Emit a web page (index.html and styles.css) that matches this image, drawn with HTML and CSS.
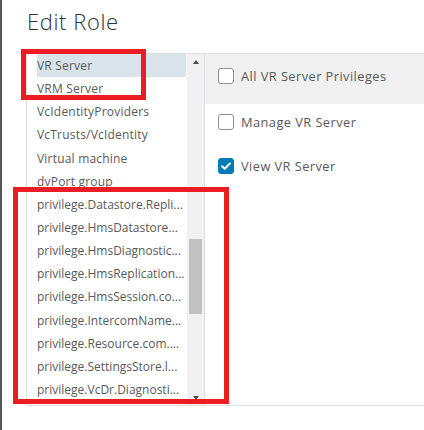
FILE: index.html
```html
<!DOCTYPE html>
<html lang="en">
<head>
<meta charset="utf-8">
<title>Edit Role</title>
<link rel="stylesheet" href="styles.css">
</head>
<body>
<div class="page">
  <h1 class="title">Edit Role</h1>
  <div class="panel">
    <div class="list-wrap">
      <ul class="list">
        <li class="item selected">VR Server</li>
        <li class="item">VRM Server</li>
        <li class="item">VcIdentityProviders</li>
        <li class="item">VcTrusts/VcIdentity</li>
        <li class="item">Virtual machine</li>
        <li class="item">dvPort group</li>
        <li class="item long">privilege.Datastore.Repli...</li>
        <li class="item long">privilege.HmsDatastore...</li>
        <li class="item long">privilege.HmsDiagnostic...</li>
        <li class="item long">privilege.HmsReplication...</li>
        <li class="item long">privilege.HmsSession.co...</li>
        <li class="item long">privilege.IntercomName...</li>
        <li class="item long">privilege.Resource.com....</li>
        <li class="item long">privilege.SettingsStore.l...</li>
        <li class="item long">privilege.VcDr.Diagnosti...</li>
      </ul>
      <div class="scrollbar">
        <div class="sb-btn"><span class="tri tri-up"></span></div>
        <div class="track"><div class="thumb"></div></div>
        <div class="sb-btn"><span class="tri tri-down"></span></div>
      </div>
    </div>
    <div class="privs">
      <label class="priv priv-all"><span class="cb"></span><span class="priv-label">All VR Server Privileges</span></label>
      <div class="priv-list">
        <label class="priv"><span class="cb"></span><span class="priv-label">Manage VR Server</span></label>
        <label class="priv"><span class="cb checked"><svg viewBox="0 0 16 16" width="16" height="16"><path d="M4 8.2 L6.8 10.8 L12 5.4" fill="none" stroke="#fff" stroke-width="2" stroke-linecap="round" stroke-linejoin="round"/></svg></span><span class="priv-label">View VR Server</span></label>
      </div>
    </div>
  </div>
  <div class="mark mark-top"></div>
  <div class="mark mark-bottom"></div>
</div>
</body>
</html>
```
FILE: styles.css
```css
* { box-sizing: border-box; }
html, body { margin: 0; padding: 0; background: #fff; }
body { width: 424px; height: 430px; overflow: hidden; font-family: "Open Sans", Lato, sans-serif; color: #565656; }

.page { position: relative; height: 430px; border-left: 2px solid #575757; }

.title {
  margin: 0;
  height: 53px;
  padding: 7px 0 0 25px;
  font-size: 22px;
  line-height: 28px;
  font-weight: 300;
  letter-spacing: 0.6px;
  color: #313131;
}

.panel {
  margin-left: 24px;
  height: 353px;
  display: flex;
  border-top: 1px solid #dedede;
  border-bottom: 1px solid #dedede;
  border-left: 1px solid #dedede;
}

.list-wrap { display: flex; flex: none; }

.list {
  list-style: none;
  margin: 0;
  padding: 0 1px 0 10px;
  width: 160px;
}
.item {
  height: 23.15px;
  line-height: 23.15px;
  font-size: 12px;
  letter-spacing: 0.2px;
  white-space: nowrap;
  overflow: hidden;
  color: #595959;
}
.item.long { letter-spacing: 0; }
.item.selected { background: #d9e4ea; }

.scrollbar {
  width: 17px;
  background: #f1f0f2;
  display: flex;
  flex-direction: column;
}
.sb-btn { height: 17px; display: flex; align-items: center; justify-content: center; }
.tri { width: 0; height: 0; border-left: 3px solid transparent; border-right: 3px solid transparent; }
.tri-up { border-bottom: 4px solid #4a4a4a; margin-top: -1px; }
.tri-down { border-top: 4px solid #4a4a4a; margin-top: 2px; }
.track { flex: 1; padding: 0 2px; }
.thumb { margin-top: 168px; height: 75px; background: #c1c1c1; }

.privs { flex: 1; border-left: 1px solid #dedede; }

.priv {
  display: flex;
  align-items: center;
  gap: 7px;
  height: 16px;
  font-size: 12.8px;
  letter-spacing: 0.45px;
  color: #595959;
}
.priv-all {
  height: 50px;
  align-items: flex-start;
  padding: 14px 0 0 13px;
  background: #f0f0f0;
}
.priv-list { padding: 10px 0 0 13px; display: flex; flex-direction: column; gap: 28px; }
.priv-label { line-height: 16px; }

.cb {
  flex: none;
  width: 16px;
  height: 16px;
  border: 1px solid #8f8f8f;
  border-radius: 3px;
  background: #fff;
}
.cb.checked { background: #0079b8; border-color: #0079b8; }
.cb svg { display: block; margin: -1px; }

.mark { position: absolute; border: 5px solid #ec1c24; }
.mark-top { left: 19px; top: 49px; width: 125px; height: 51px; }
.mark-bottom { left: 11px; top: 187px; width: 216px; height: 217px; }
```
